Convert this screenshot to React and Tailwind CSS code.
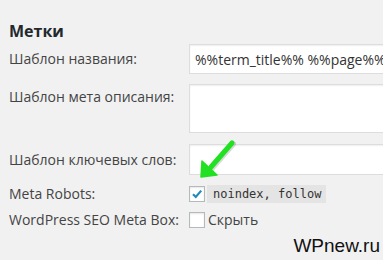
export default function App() {
  const font = { fontFamily: '"Open Sans", "Liberation Sans", sans-serif' };

  return (
    <div
      className="relative w-[383px] h-[260px] overflow-hidden bg-[#f1f1f1] text-[#444] pl-[9px]"
      style={font}
    >
      <h2 className="pt-[21px] text-[16px] leading-[20px] font-bold text-[#23282d]">Метки</h2>

      {/* title template */}
      <div className="mt-[3px] flex h-[30px] items-center">
        <div className="w-[180px] shrink-0 text-[14px] leading-[20px] whitespace-nowrap">Шаблон названия:</div>
        <div className="h-full w-[220px] shrink-0 flex items-center bg-white border border-[#ddd] shadow-[inset_0_1px_2px_rgba(0,0,0,0.07)] pl-[5px] text-[14px] text-[#333] whitespace-nowrap">
          %%term_title%% %%page%%
        </div>
      </div>

      {/* meta description */}
      <div className="mt-[10px] flex h-[49px]">
        <div className="w-[180px] shrink-0 pt-[3px] text-[14px] leading-[20px] whitespace-nowrap">Шаблон мета описания:</div>
        <div className="h-full w-[220px] shrink-0 bg-white border border-[#ddd] shadow-[inset_0_1px_2px_rgba(0,0,0,0.07)]" />
      </div>

      {/* keywords */}
      <div className="mt-[11px] flex h-[31px] items-center">
        <div className="w-[180px] shrink-0 text-[14px] leading-[20px] whitespace-nowrap">Шаблон ключевых слов:</div>
        <div className="h-full w-[220px] shrink-0 bg-white border border-[#ddd] shadow-[inset_0_1px_2px_rgba(0,0,0,0.07)]" />
      </div>

      {/* meta robots */}
      <div className="mt-[10px] flex h-[18px] items-center">
        <div className="w-[180px] shrink-0 text-[14px] leading-[20px] whitespace-nowrap">Meta Robots:</div>
        <div className="flex shrink-0 items-center">
          <span className="flex h-[16px] w-[16px] shrink-0 items-center justify-center bg-white border border-[#b4b9be] shadow-[inset_0_1px_2px_rgba(0,0,0,0.1)]">
            <svg width="12" height="12" viewBox="0 0 12 12">
              <path d="M2 6.2 L4.8 9 L10.2 2.6" fill="none" stroke="#1e8cbe" strokeWidth="2.2" />
            </svg>
          </span>
          <code
            className="ml-[2px] h-[18px] w-[119px] shrink-0 flex items-center bg-[#e4e4e4] pl-[6px] text-[12px] text-[#333] whitespace-nowrap"
            style={{ fontFamily: '"DejaVu Sans Mono", "Liberation Mono", monospace' }}
          >
            noindex, follow
          </code>
        </div>
      </div>

      {/* meta box */}
      <div className="mt-[8px] flex h-[17px] items-center">
        <div className="w-[180px] shrink-0 text-[14px] leading-[20px] whitespace-nowrap">WordPress SEO Meta Box:</div>
        <div className="flex shrink-0 items-center">
          <span className="h-[16px] w-[16px] shrink-0 bg-white border border-[#b4b9be] shadow-[inset_0_1px_2px_rgba(0,0,0,0.1)]" />
          <span className="ml-[3px] text-[14px] leading-[20px]">Скрыть</span>
        </div>
      </div>

      {/* watermark */}
      <div
        className="absolute right-[3px] top-[235px] text-[19px] leading-[22px] text-[#111] whitespace-nowrap"
        style={{ fontFamily: '"Liberation Sans", Arial, sans-serif' }}
      >
        WPnew.ru
      </div>

      {/* green arrow over the fields */}
      <svg className="absolute left-[195px] top-[138px]" width="44" height="46" viewBox="0 0 44 46">
        <path d="M37 5 L16 29" stroke="rgba(0,0,0,0.15)" strokeWidth="6" strokeLinecap="round" transform="translate(1 1)" />
        <path d="M37 5 L16 29" stroke="#22e022" strokeWidth="5" strokeLinecap="round" />
        <path d="M6 39 L7 23 L22 37 Z" fill="#22e022" stroke="#22e022" strokeWidth="1.5" strokeLinejoin="round" />
      </svg>
    </div>
  );
}
